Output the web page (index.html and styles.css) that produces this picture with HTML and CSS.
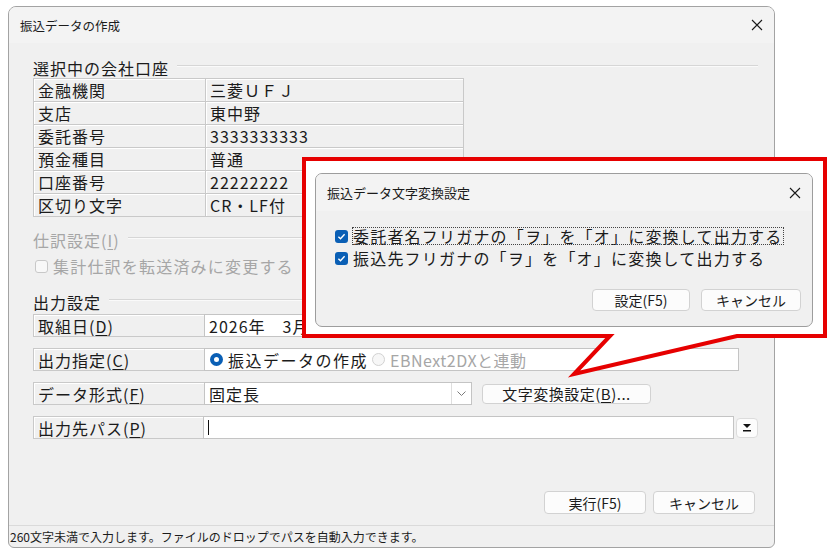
FILE: index.html
```html
<!DOCTYPE html>
<html lang="ja">
<head>
    <meta charset="UTF-8">
    <title>振込データの作成</title>
    <link rel="stylesheet" href="styles.css">
</head>
<body>
    <div class="window">
        <div class="titlebar">
            <span>振込データの作成</span>
            <svg class="close" width="12" height="12" viewBox="0 0 12 12"><path d="M1 1L11 11M11 1L1 11" stroke="#1a1a1a" stroke-width="1.1"/></svg>
        </div>
        <div class="content">
            <div class="group-head">選択中の会社口座</div>
            <table class="info">
                <tr><td class="key">金融機関</td><td>三菱ＵＦＪ</td></tr>
                <tr><td class="key">支店</td><td>東中野</td></tr>
                <tr><td class="key">委託番号</td><td>3333333333</td></tr>
                <tr><td class="key">預金種目</td><td>普通</td></tr>
                <tr><td class="key">口座番号</td><td>22222222</td></tr>
                <tr><td class="key">区切り文字</td><td>CR・LF付</td></tr>
            </table>

            <div class="group-head disabled">仕訳設定(<u>I</u>)</div>
            <label class="check disabled"><span class="box"></span>集計仕訳を転送済みに変更する</label>

            <div class="group-head first-out">出力設定</div>
            <div class="field first">
                <div class="key">取組日(<u>D</u>)</div>
                <div class="val date">2026年　3月25日</div>
            </div>
            <div class="field">
                <div class="key">出力指定(<u>C</u>)</div>
                <div class="val wide">
                    <span class="radio on"></span><span class="opt">振込データの作成</span>
                    <span class="radio off"></span><span class="opt disabled">EBNext2DXと連動</span>
                </div>
            </div>
            <div class="field">
                <div class="key">データ形式(<u>F</u>)</div>
                <div class="val combo">
                    固定長
                    <span class="drop"><svg width="9" height="5" viewBox="0 0 9 5"><path d="M0.5 0.5L4.5 4.5L8.5 0.5" fill="none" stroke="#7a7a7a"/></svg></span>
                </div>
                <button class="btn-conv">文字変換設定(<u>B</u>)...</button>
            </div>
            <div class="field">
                <div class="key">出力先パス(<u>P</u>)</div>
                <div class="val path"><span class="caret"></span></div>
                <button class="btn-hist"><svg width="10" height="8" viewBox="0 0 10 8"><path d="M1 0H9L5 4Z" fill="#111"/><rect x="1" y="6" width="8" height="1.5" fill="#111"/></svg></button>
            </div>

            <div class="actions">
                <button class="btn">実行(F5)</button>
                <button class="btn">キャンセル</button>
            </div>
        </div>
        <div class="status">260文字未満で入力します。ファイルのドロップでパスを自動入力できます。</div>
    </div>

    <!-- red callout drawn over the dialog -->
    <svg class="callout" width="833" height="558" viewBox="0 0 833 558">
        <path d="M304 159H825V336H737L574 374L610 336H304Z" fill="#fff" stroke="#e60000" stroke-width="4"/>
    </svg>

    <div class="popup">
        <div class="popup-title">
            <span>振込データ文字変換設定</span>
            <svg class="close" width="12" height="12" viewBox="0 0 12 12"><path d="M1 1L11 11M11 1L1 11" stroke="#1a1a1a" stroke-width="1.1"/></svg>
        </div>
        <div class="popup-body">
            <label class="check on"><span class="box"><svg width="13" height="13" viewBox="0 0 13 13"><path d="M3.4 6.8L5.5 8.8L9.6 4.3" fill="none" stroke="#fff" stroke-width="1.4"/></svg></span><span class="focus">委託者名フリガナの「ヲ」を「オ」に変換して出力する</span></label>
            <label class="check on second"><span class="box"><svg width="13" height="13" viewBox="0 0 13 13"><path d="M3.4 6.8L5.5 8.8L9.6 4.3" fill="none" stroke="#fff" stroke-width="1.4"/></svg></span><span>振込先フリガナの「ヲ」を「オ」に変換して出力する</span></label>
            <div class="popup-actions">
                <button class="btn pbtn">設定(F5)</button>
                <button class="btn pbtn cancel">キャンセル</button>
            </div>
        </div>
    </div>
</body>
</html>
```

FILE: styles.css
```css
* {
    box-sizing: border-box;
}
body {
    margin: 0;
    width: 833px;
    height: 558px;
    overflow: hidden;
    background-color: #fff;
    font-family: "Noto Sans CJK JP", "Noto Sans", sans-serif;
    color: #1b1b1b;
}
u {
    text-decoration-thickness: 1px;
    text-underline-offset: 2px;
}
.window {
    margin: 6px 0 0 8px;
    width: 767px;
    height: 542px;
    border: 1px solid #a3a3a3;
    border-radius: 8px 8px 6px 6px;
    background-color: #f0f0f0;
    display: flex;
    flex-direction: column;
    overflow: hidden;
}
.titlebar {
    height: 36px;
    flex: none;
    background-color: #f3f3f3;
    display: flex;
    align-items: center;
    justify-content: space-between;
    padding: 0 11px 0 11px;
    font-size: 12.5px;
}
.content {
    flex: 1;
    padding: 15px 16px 11px 24px;
    display: flex;
    flex-direction: column;
}
.group-head {
    display: flex;
    align-items: center;
    height: 20px;
    font-size: 16px;
    line-height: 20px;
    letter-spacing: 1px;
}
.group-head::after {
    content: "";
    flex: 1;
    margin: -4px 0 0 8px;
    border-top: 1px solid #d6d6d6;
    border-bottom: 1px solid #fafafa;
}
.group-head.disabled {
    margin-top: 13px;
    color: #a6a6a6;
}
.group-head.first-out {
    margin-top: 16px;
}
.disabled {
    color: #a6a6a6;
}
.info {
    border-collapse: collapse;
    width: 431px;
    font-size: 16px;
    letter-spacing: 1px;
}
.info td {
    height: 23px;
    padding: 0 4px;
    line-height: 20px;
    border: 1px solid #c9c9c9;
    box-shadow: inset 1px 1px 0 #fff;
    white-space: nowrap;
}
.info td.key {
    width: 172px;
}
.check {
    display: flex;
    align-items: center;
    height: 20px;
    margin-top: 6px;
    font-size: 16px;
    letter-spacing: 1.2px;
}
.check .box {
    width: 13px;
    height: 13px;
    margin: 0 5px 0 2px;
    border-radius: 3px;
    border: 1px solid #c8c8c8;
    background-color: #f8f8f8;
    flex: none;
}
.check.on .box {
    border: none;
    background-color: #0a5fb5;
    display: flex;
}
.field {
    display: flex;
    height: 23px;
    margin-top: 11px;
    font-size: 16px;
    letter-spacing: 1px;
}
.field.first {
    margin-top: 2px;
}
.field .key {
    width: 172px;
    padding: 0 4px;
    display: flex;
    align-items: center;
    border: 1px solid #c9c9c9;
    box-shadow: inset 1px 1px 0 #fff;
    white-space: nowrap;
}
.field .val {
    margin-left: -1px;
    padding: 0 4px;
    display: flex;
    align-items: center;
    border: 1px solid #c4c4c4;
    background-color: #fff;
    white-space: nowrap;
}
.val.date {
    width: 259px;
}
.val.wide {
    width: 535px;
    letter-spacing: 1.5px;
}
.radio {
    width: 13px;
    height: 13px;
    border-radius: 50%;
    flex: none;
    margin: 0 5px 0 1px;
}
.radio.on {
    border: 4px solid #0a5fb5;
    background-color: #fff;
}
.radio.off {
    margin-left: 4px;
    border: 1px solid #d2d2d2;
    background-color: #f7f7f7;
}
.opt.disabled {
    letter-spacing: 0.5px;
}
.val.combo {
    width: 268px;
    padding-right: 0;
}
.drop {
    margin-left: auto;
    width: 20px;
    height: 100%;
    border-left: 1px solid #dedede;
    display: flex;
    align-items: center;
    justify-content: center;
}
button {
    font-family: inherit;
    color: #1b1b1b;
    background-color: #fcfcfc;
    border: 1px solid #d2d2d2;
    border-radius: 4px;
    padding: 0;
    cursor: pointer;
}
.btn-conv {
    margin-left: 10px;
    width: 169px;
    height: 20px;
    align-self: center;
    font-size: 15px;
    letter-spacing: 0.5px;
    line-height: 18px;
}
.val.path {
    width: 534px;
}
.caret {
    width: 1px;
    height: 15px;
    background-color: #111;
}
.btn-hist {
    margin-left: 2px;
    width: 22px;
    height: 20px;
    align-self: center;
    display: flex;
    align-items: center;
    justify-content: center;
    border-color: #dcdcdc;
}
.actions {
    margin-top: auto;
    display: flex;
    justify-content: flex-end;
    gap: 7px;
    padding-right: 3px;
}
.btn {
    width: 102px;
    height: 23px;
    font-size: 14px;
}
.status {
    height: 22px;
    flex: none;
    border-top: 1px solid #dadada;
    font-size: 12px;
    padding-left: 1px;
    display: flex;
    align-items: center;
}
.callout {
    position: absolute;
    left: 0;
    top: 0;
}
.popup {
    position: absolute;
    left: 315px;
    top: 173px;
    width: 498px;
    height: 154px;
    border: 1px solid #9d9d9d;
    border-radius: 7px;
    background-color: #f0f0f0;
    overflow: hidden;
}
.popup-title {
    height: 37px;
    background-color: #f3f3f3;
    display: flex;
    align-items: center;
    justify-content: space-between;
    padding: 0 11px;
    font-size: 13px;
}
.popup-body {
    padding: 16px 11px 0 17px;
}
.popup-body .check {
    margin-top: 0;
    height: 18px;
    letter-spacing: 1.2px;
}
.popup-body .check .box {
    margin-right: 5px;
}
.popup-body .check.second {
    margin-top: 4px;
}
.focus {
    outline: 1px dotted #444;
    line-height: 16px;
}
.popup-actions {
    margin-top: 22px;
    display: flex;
    justify-content: flex-end;
    gap: 11px;
}
.pbtn {
    width: 98px;
    height: 22px;
    font-size: 14px;
}
.pbtn.cancel {
    width: 100px;
}
```
